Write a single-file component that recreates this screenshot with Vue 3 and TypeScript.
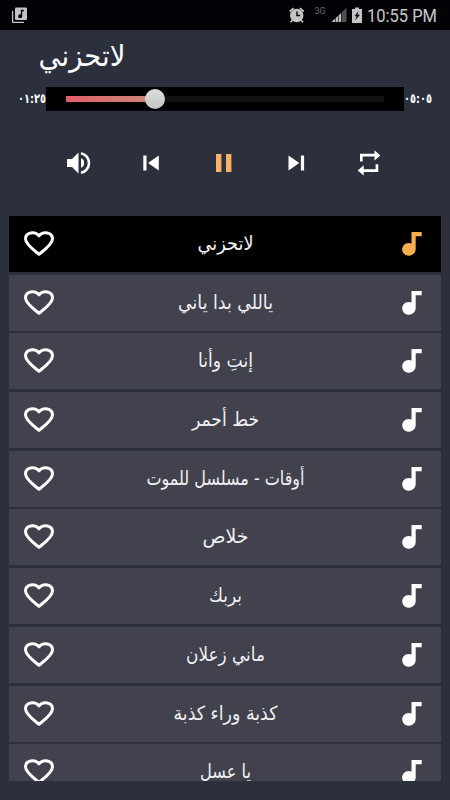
<script setup lang="ts">
interface Song {
  title: string
  width: number
  active?: boolean
}

const songs: Song[] = [
  { title: 'لاتحزني', width: 56, active: true },
  { title: 'ياللي بدا ياني', width: 95 },
  { title: 'إنتِ وأنا', width: 55 },
  { title: 'خط أحمر', width: 67 },
  { title: 'أوقات - مسلسل للموت', width: 158 },
  { title: 'خلاص', width: 46 },
  { title: 'بربك', width: 33 },
  { title: 'ماني زعلان', width: 79 },
  { title: 'كذبة وراء كذبة', width: 104 },
  { title: 'يا عسل', width: 51 },
]
</script>

<template>
  <div class="screen">
    <header class="status">
      <svg class="library" width="16" height="17" viewBox="0 0 16 17">
        <path d="M.6 4v11.4H12" fill="none" stroke="#c3c3c5" stroke-width="1.3" />
        <rect x="3" y=".6" width="12" height="12.4" rx="1.3" fill="#c3c3c5" />
        <path d="M8.8 2.8h3v1.7h-1.6v4.7a2 2 0 1 1-1.4-1.9z" fill="#050508" />
      </svg>
      <svg class="status-icons" width="154" height="30" viewBox="0 0 154 30">
        <g fill="#c4c4c6">
          <circle cx="9.700" cy="15.500" r="6.700" />
          <path d="M2.700 11.500l4-3.300M12.800 8.200l4 3.300M5.500 20l-2 2.300M14 20l2 2.300" stroke="#c4c4c6" stroke-width="1.700" />
          <path d="M10 11.500v4h3.300" fill="none" stroke="#08080c" stroke-width="1.500" />
        </g>
        <text x="27.500" y="14" class="network" textLength="11" lengthAdjust="spacingAndGlyphs">3G</text>
        <path d="M44.500 22L59.500 8v14z" fill="#515154" />
        <path d="M44.500 22L54 13.300V22z" fill="#bdbdbf" />
        <path d="M48.500 16v6M51.500 14v8M54.500 11v11" stroke="#1b1b1e" stroke-width=".700" />
        <path d="M65 9h3V7.400h4V9h3v14H65z" fill="#c4c4c6" />
        <path d="M71.500 11l-4 5.300h2.200L68 20.500l5-5.800h-2.500z" fill="#08080c" />
        <text x="80" y="22.300" class="clock" textLength="70" lengthAdjust="spacingAndGlyphs">10:55 PM</text>
      </svg>
    </header>

    <section class="player">
      <svg class="title" width="100" height="48" viewBox="0 0 100 48">
        <text x="48" y="35.700" text-anchor="middle" textLength="87" lengthAdjust="spacingAndGlyphs">لاتحزني</text>
      </svg>
      <div class="progress">
        <svg class="time" width="28" height="24" viewBox="0 0 28 24">
          <text x="14" y="16.300" text-anchor="middle" textLength="28" lengthAdjust="spacingAndGlyphs">٠١:٢٥</text>
        </svg>
        <div class="seek">
          <div class="track"><div class="fill"></div><div class="thumb"></div></div>
        </div>
        <svg class="time" width="28" height="24" viewBox="0 0 28 24">
          <text x="14" y="16.300" text-anchor="middle" textLength="28" lengthAdjust="spacingAndGlyphs">٠٥:٠٥</text>
        </svg>
      </div>
      <div class="controls">
        <svg viewBox="0 0 32 32">
          <path d="M5 12h5l6.500-6.500v21L10 20H5z" />
          <path d="M19 11.200a5.200 5.200 0 0 1 0 9.600z" />
          <path d="M19 6.200a10 10 0 0 1 0 19.600" fill="none" stroke="#fff" stroke-width="2.600" />
        </svg>
        <svg viewBox="0 0 32 32"><path d="M8.300 8.500h3.200v15H8.300zM13 16L23.800 8.500v15z" /></svg>
        <svg viewBox="0 0 32 32" class="pause"><path d="M8 7h5.400v18H8zM18 7h5.400v18H18z" /></svg>
        <svg viewBox="0 0 32 32"><path d="M20.900 8.500h3.200v15h-3.200zM8.500 8.500L19.300 16 8.500 23.500z" /></svg>
        <svg viewBox="0 0 32 32">
          <path d="M7 14.500V6.800h14.500V3.300L27.300 8.400l-5.800 5.200v-4H9.700v4.900zM25.300 17.300v7.600H10.700v3.600l-6-5.100 6-5.200v4h11.900v-4.900z" />
        </svg>
      </div>
    </section>

    <main class="list">
      <article v-for="song in songs" :key="song.title" class="row" :class="{ active: song.active }">
        <svg class="heart" width="32" height="28" viewBox="0 0 32 28">
          <path d="M16 24.300C11.500 20.600 2.500 14.600 2.500 8.800C2.500 2.400 11.800 .800 16 5.800C20.200 .800 29.500 2.400 29.500 8.800C29.500 14.600 20.500 20.600 16 24.300Z" />
        </svg>
        <svg class="song" width="180" height="56" viewBox="0 0 180 56">
          <text x="86.500" y="33.500" text-anchor="middle" :textLength="song.width" lengthAdjust="spacingAndGlyphs">{{ song.title }}</text>
        </svg>
        <svg class="note" width="20" height="26" viewBox="0 0 20 26">
          <path d="M9.500 1H19.700v4.200H13.700V18.300A6.800 6.400 0 1 1 9.500 12.400z" />
        </svg>
      </article>
    </main>
  </div>
</template>

<style>
body {
  background: #2b303c;
}
</style>

<style scoped>
.screen {
  width: 450px;
  height: 800px;
  overflow: hidden;
  background: #2b303c;
  color: #fff;
  font-family: "DejaVu Sans", sans-serif;
}

svg {
  display: block;
  flex: none;
  overflow: visible;
}

text {
  fill: #fff;
}

.status {
  display: flex;
  justify-content: space-between;
  height: 30px;
  padding: 0 9px 0 12px;
  background: #030307;
}

.library {
  margin-top: 7px;
}

.clock {
  font: 19px Roboto, sans-serif;
  fill: #c8c8ca;
}

.network {
  font: 9px Roboto, sans-serif;
  fill: #68686b;
}

.player {
  height: 186px;
}

.title {
  margin-left: 34px;
  font-size: 29.5px;
}

.progress {
  display: flex;
  align-items: center;
  height: 24px;
  margin-top: 9px;
  padding: 0 18px;
}

.time {
  font-size: 13px;
  font-weight: bold;
}

.seek {
  flex: 1;
  height: 24px;
  padding: 8px 20px;
  box-sizing: border-box;
  background: #000;
}

.track {
  position: relative;
  height: 6px;
  margin-top: 1px;
  border-radius: 1px;
  background: #111112;
}

.fill {
  width: 90px;
  height: 6px;
  background: linear-gradient(90deg, #e05e68, #c98b78);
}

.thumb {
  position: absolute;
  top: -7px;
  left: 79px;
  width: 20px;
  height: 20px;
  border-radius: 50%;
  background: linear-gradient(#dedede, #c4c4c4);
}

.controls {
  display: flex;
  justify-content: space-between;
  margin-top: 36px;
  padding: 0 65px 0 62px;
}

.controls svg {
  width: 32px;
  height: 32px;
  fill: #fff;
}

.controls .pause {
  fill: #f5b168;
}

.list {
  display: flex;
  flex-direction: column;
  gap: 2.7px;
  width: 432px;
  height: 565px;
  margin-left: 9px;
  overflow: hidden;
}

.row {
  display: flex;
  flex: none;
  align-items: center;
  justify-content: space-between;
  box-sizing: border-box;
  height: 56px;
  padding: 0 19px 0 14px;
  background: #41424d;
}

.row.active {
  background: #000;
}

.heart path {
  fill: none;
  stroke: #fff;
  stroke-width: 3;
  stroke-linejoin: round;
}

.song {
  font-size: 19.5px;
}

.song text {
  fill: #f0f0f3;
}

.note {
  fill: #fff;
}

.active .note {
  fill: #f8ac50;
}
</style>
